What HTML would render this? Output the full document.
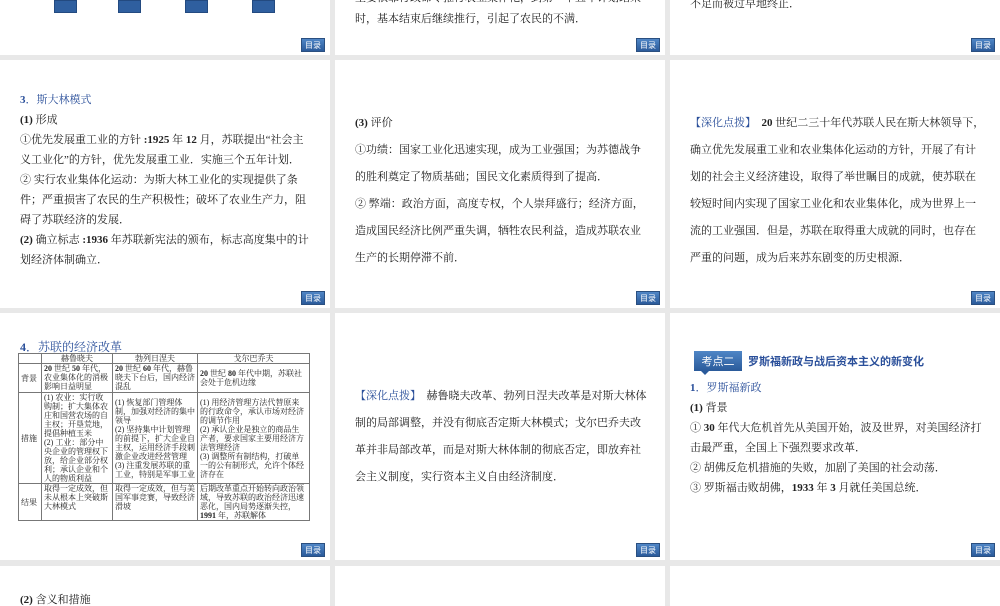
<!DOCTYPE html>
<html><head><meta charset="utf-8"><style>
*{margin:0;padding:0;box-sizing:border-box}
body{width:1000px;height:600px;background:#e8e8e8;position:relative;overflow:hidden;font-family:"Liberation Serif","Noto Serif CJK SC",serif;color:#222;font-size:11px}
.p{position:absolute;background:#fff;overflow:hidden}
.btn{position:absolute;right:5px;bottom:3px;width:24px;height:14px;background:linear-gradient(#4f86c6,#2a5a9a);color:#fff;font-size:8px;text-align:center;line-height:14px;font-family:"Noto Sans CJK SC",sans-serif;border:1px solid #2a4f80}
.t{position:absolute;left:20px;right:16px;line-height:21px}
.h{color:#2a4f9a}
b{font-weight:bold}
table{border-collapse:collapse;font-size:8px;line-height:9px;table-layout:fixed}
td{border:1px solid #777;vertical-align:top;padding:0 2px;overflow:hidden}
.sq{position:absolute;top:0;width:23px;height:13px;background:#2f5f9f;border:1px solid #234a80}
</style></head><body>
<!-- row1 -->
<div class="p" style="left:0;top:0;width:330px;height:55px">
<div class="sq" style="left:54px"></div><div class="sq" style="left:118px"></div><div class="sq" style="left:185px"></div><div class="sq" style="left:252px"></div>
<div class="btn">目录</div></div>
<div class="p" style="left:335px;top:0;width:330px;height:55px"><div class="t" style="top:-12px">主要依靠行政命令推行农业集体化，到第一个五年计划结束时，基本结束后继续推行，引起了农民的不满．</div><div class="btn">目录</div></div>
<div class="p" style="left:670px;top:0;width:330px;height:55px"><div class="t" style="top:-6px">不足而被过早地终止．</div><div class="btn">目录</div></div>
<!-- row2 -->
<div class="p" style="left:0;top:60px;width:330px;height:248px">
<div class="t" style="top:30px;line-height:20px"><span class="h"><b>3</b>．斯大林模式</span><br><b>(1)</b> 形成<br>①优先发展重工业的方针 <b>:1925</b> 年 <b>12</b> 月，苏联提出“社会主义工业化”的方针，优先发展重工业．实施三个五年计划．<br>② 实行农业集体化运动：为斯大林工业化的实现提供了条件；严重损害了农民的生产积极性；破坏了农业生产力，阻碍了苏联经济的发展．<br><b>(2)</b> 确立标志 <b>:1936</b> 年苏联新宪法的颁布，标志高度集中的计划经济体制确立．</div>
<div class="btn">目录</div></div>
<div class="p" style="left:335px;top:60px;width:330px;height:248px">
<div class="t" style="top:50px;line-height:27px"><b>(3)</b> 评价<br>①功绩：国家工业化迅速实现，成为工业强国；为苏德战争的胜利奠定了物质基础；国民文化素质得到了提高．<br>② 弊端：政治方面，高度专权，个人崇拜盛行；经济方面，造成国民经济比例严重失调，牺牲农民利益，造成苏联农业生产的长期停滞不前．</div>
<div class="btn">目录</div></div>
<div class="p" style="left:670px;top:60px;width:330px;height:248px">
<div class="t" style="top:50px;line-height:27px;right:14px"><span class="h">【深化点拨】</span>　<b>20</b> 世纪二三十年代苏联人民在斯大林领导下，确立优先发展重工业和农业集体化运动的方针，开展了有计划的社会主义经济建设，取得了举世瞩目的成就，使苏联在较短时间内实现了国家工业化和农业集体化，成为世界上一流的工业强国．但是，苏联在取得重大成就的同时，也存在严重的问题，成为后来苏东剧变的历史根源．</div>
<div class="btn">目录</div></div>
<!-- row3 -->
<div class="p" style="left:0;top:313px;width:330px;height:247px">
<div class="h" style="position:absolute;left:20px;top:28px;font-size:12px;line-height:12px"><b>4</b>．苏联的经济改革</div>
<table style="position:absolute;left:18px;top:40px;width:292px">
<colgroup><col style="width:23px"><col style="width:71px"><col style="width:85px"><col></colgroup>
<tr style="height:9px"><td></td><td style="text-align:center">赫鲁晓夫</td><td style="text-align:center">勃列日涅夫</td><td style="text-align:center">戈尔巴乔夫</td></tr>
<tr style="height:29px"><td style="vertical-align:middle">背景</td><td><b>20</b> 世纪 <b>50</b> 年代，农业集体化的消极影响日益明显</td><td><b>20</b> 世纪 <b>60</b> 年代，赫鲁晓夫下台后，国内经济混乱</td><td style="vertical-align:middle"><b>20</b> 世纪 <b>80</b> 年代中期，苏联社会处于危机边缘</td></tr>
<tr style="height:91px"><td style="vertical-align:middle">措施</td><td>(1) 农业：实行收购制；扩大集体农庄和国营农场的自主权；开垦荒地，提倡种植玉米<br>(2) 工业：部分中央企业的管理权下放，给企业部分权利；承认企业和个人的物质利益</td><td style="vertical-align:middle">(1) 恢复部门管理体制，加强对经济的集中领导<br>(2) 坚持集中计划管理的前提下，扩大企业自主权，运用经济手段刺激企业改进经营管理<br>(3) 注重发展苏联的重工业，特别是军事工业</td><td style="vertical-align:middle">(1) 用经济管理方法代替原来的行政命令，承认市场对经济的调节作用<br>(2) 承认企业是独立的商品生产者，要求国家主要用经济方法管理经济<br>(3) 调整所有制结构，打破单一的公有制形式，允许个体经济存在</td></tr>
<tr style="height:36px"><td style="vertical-align:middle">结果</td><td>取得一定成效，但未从根本上突破斯大林模式</td><td>取得一定成效，但与美国军事竞赛，导致经济滑坡</td><td>后期改革重点开始转向政治领域，导致苏联的政治经济迅速恶化，国内局势逐渐失控，<b>1991</b> 年，苏联解体</td></tr>
</table>
<div class="btn">目录</div></div>
<div class="p" style="left:335px;top:313px;width:330px;height:247px">
<div class="t" style="top:70px;line-height:27px"><span class="h">【深化点拨】</span>　赫鲁晓夫改革、勃列日涅夫改革是对斯大林体制的局部调整，并没有彻底否定斯大林模式；戈尔巴乔夫改革并非局部改革，而是对斯大林体制的彻底否定，即放弃社会主义制度，实行资本主义自由经济制度．</div>
<div class="btn">目录</div></div>
<div class="p" style="left:670px;top:313px;width:330px;height:247px">
<div style="position:absolute;left:24px;top:38px;width:48px;height:20px;background:linear-gradient(#4f86c6,#2a5a9a);color:#fff;font-size:11px;line-height:20px;text-align:center;font-family:'Noto Sans CJK SC',sans-serif">考点二</div>
<div style="position:absolute;left:30px;top:57px;width:0;height:0;border-left:5px solid transparent;border-right:5px solid transparent;border-top:5px solid #2a5a9a"></div>
<div class="h" style="position:absolute;left:78px;top:40px;font-size:11px;font-weight:bold;font-family:'Noto Sans CJK SC',sans-serif">罗斯福新政与战后资本主义的新变化</div>
<div class="t" style="top:65px;line-height:20px"><span class="h"><b>1</b>．罗斯福新政</span><br><b>(1)</b> 背景<br>① <b>30</b> 年代大危机首先从美国开始，波及世界，对美国经济打击最严重，全国上下强烈要求改革．<br>② 胡佛反危机措施的失败，加剧了美国的社会动荡．<br>③ 罗斯福击败胡佛，<b>1933</b> 年 <b>3</b> 月就任美国总统．</div>
<div class="btn">目录</div></div>
<!-- row4 -->
<div class="p" style="left:0;top:566px;width:330px;height:40px"><div class="t" style="top:24px"><b>(2)</b> 含义和措施</div></div>
<div class="p" style="left:335px;top:566px;width:330px;height:40px"></div>
<div class="p" style="left:670px;top:566px;width:330px;height:40px"></div>
</body></html>
